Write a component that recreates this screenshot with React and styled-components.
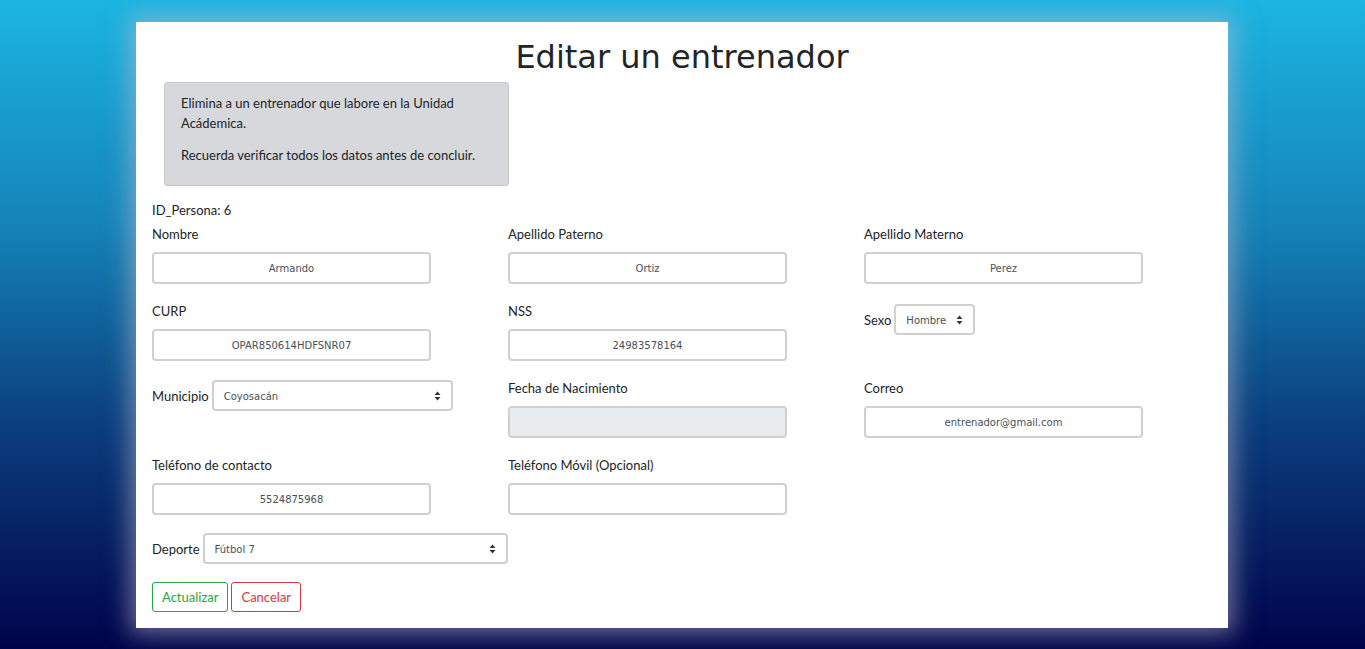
import React from "react";
import styled, { createGlobalStyle } from "styled-components";

const Global = createGlobalStyle`
	html, body {
		margin: 0;
		padding: 0;
	}
	body {
		min-height: 649px;
		background: linear-gradient(to bottom, #1cb5e2 0%, #1583b8 35%, #0b3f7e 65%, #01034a 100%);
		font-family: "Lato", "Liberation Sans", sans-serif;
		color: #212529;
	}
`;

const Page = styled.div`
	padding: 22px 137px 21px 136px;
`;

const Card = styled.div`
	background: #fff;
	height: 606px;
	box-sizing: border-box;
	padding: 14px 16px 0 16px;
	box-shadow: 0 0 22px 6px rgba(190, 190, 205, 0.55);
`;

const Title = styled.h1`
	margin: 0;
	text-align: center;
	font-family: "DejaVu Sans", Verdana, sans-serif;
	font-weight: normal;
	font-size: 32px;
	line-height: 42px;
	color: #212529;
`;

const Alert = styled.div`
	width: 345px;
	height: 104px;
	box-sizing: border-box;
	margin: 4px 0 0 12px;
	padding: 10px 16px 0 16px;
	background: #d6d8db;
	border: 1px solid #c6c8ca;
	border-radius: 3px;
	font-size: 13px;
	line-height: 20px;

	p {
		margin: 0 0 12px 0;
	}
`;

const Ident = styled.div`
	margin-top: 14px;
	font-size: 13px;
	line-height: 20px;
	height: 20px;
`;

const Grid = styled.div`
	display: grid;
	grid-template-columns: 356px 356px 356px;
	grid-auto-rows: 77px;
	margin-top: 4px;
`;

const Cell = styled.div`
	display: flex;
	flex-direction: column;
	align-items: flex-start;
`;

const Label = styled.label`
	font-size: 13px;
	line-height: 20px;
	margin-bottom: 8px;
`;

const Input = styled.div`
	width: 279px;
	height: 32px;
	box-sizing: border-box;
	border: 2px solid #d0d0d0;
	border-radius: 4px;
	background: ${(p) => (p.disabled ? "#e9ecef" : "#fff")};
	display: flex;
	align-items: center;
	justify-content: center;
	font-family: "DejaVu Sans", Verdana, sans-serif;
	font-size: 10px;
	color: #495057;
`;

const Inline = styled.div`
	display: flex;
	align-items: center;
	gap: 3px;
	margin-top: ${(p) => p.top || 0}px;
	font-size: 13px;
`;

const Select = styled.div`
	width: ${(p) => p.width}px;
	height: 31px;
	box-sizing: border-box;
	border: 2px solid #d0d0d0;
	border-radius: 4px;
	background: #fff;
	display: flex;
	align-items: center;
	justify-content: space-between;
	padding: 0 10px 0 10px;
	font-family: "DejaVu Sans", Verdana, sans-serif;
	font-size: 10px;
	color: #495057;

	span {
		padding-top: 1px;
	}
`;

const Arrows = () => (
	<svg width="7" height="10" viewBox="0 0 7 10">
		<path d="M3.5 0.5 L6.5 4 H0.5 Z M3.5 9.5 L6.5 6 H0.5 Z" fill="#333" />
	</svg>
);

const Actions = styled.div`
	display: flex;
	gap: 3px;
	margin-top: 18px;
`;

const Button = styled.button`
	height: 30px;
	padding: 0 9px;
	background: #fff;
	border: 1px solid ${(p) => p.color};
	border-radius: 3px;
	color: ${(p) => p.color};
	font-family: "Lato", "Liberation Sans", sans-serif;
	font-size: 13px;
`;

const Field = ({ label, value, disabled }) => (
	<Cell>
		<Label>{label}</Label>
		<Input disabled={disabled}>{value}</Input>
	</Cell>
);

const Drop = ({ label, value, width, top }) => (
	<Inline top={top}>
		<span>{label}</span>
		<Select width={width}>
			<span>{value}</span>
			<Arrows />
		</Select>
	</Inline>
);

export default function App() {
	return (
		<>
			<Global />
			<Page>
				<Card>
					<Title>Editar un entrenador</Title>
					<Alert>
						<p>Elimina a un entrenador que labore en la Unidad Acádemica.</p>
						<p>Recuerda verificar todos los datos antes de concluir.</p>
					</Alert>
					<Ident>ID_Persona: 6</Ident>
					<Grid>
						<Field label="Nombre" value="Armando" />
						<Field label="Apellido Paterno" value="Ortiz" />
						<Field label="Apellido Materno" value="Perez" />
						<Field label="CURP" value="OPAR850614HDFSNR07" />
						<Field label="NSS" value="24983578164" />
						<Cell>
							<Drop label="Sexo" value="Hombre" width={81} top={3} />
						</Cell>
						<Cell>
							<Drop label="Municipio" value="Coyosacán" width={241} top={2} />
						</Cell>
						<Field label="Fecha de Nacimiento" value="" disabled />
						<Field label="Correo" value="entrenador@gmail.com" />
						<Field label="Teléfono de contacto" value="5524875968" />
						<Field label="Teléfono Móvil (Opcional)" value="" />
					</Grid>
					<Drop label="Deporte" value="Fútbol 7" width={305} top={1} />
					<Actions>
						<Button color="#28a745">Actualizar</Button>
						<Button color="#dc3545">Cancelar</Button>
					</Actions>
				</Card>
			</Page>
		</>
	);
}
